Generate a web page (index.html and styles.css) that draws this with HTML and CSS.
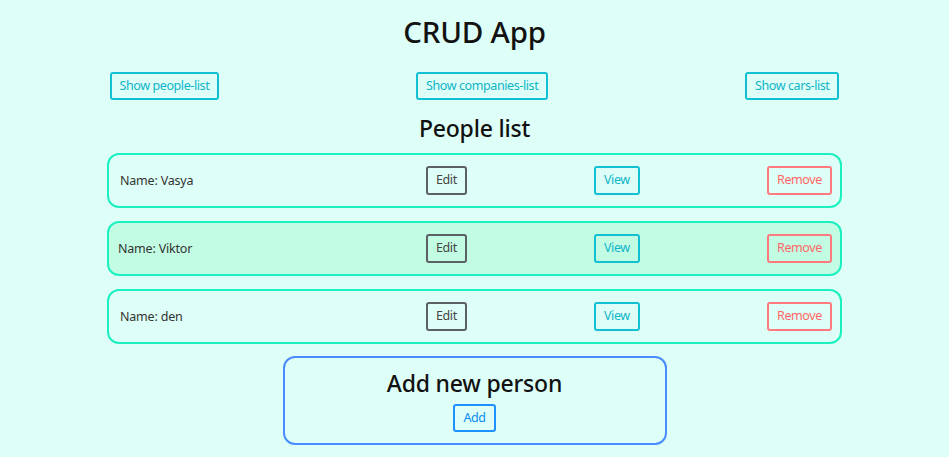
FILE: index.html
```html
<!DOCTYPE html>
<html>
<head>
<meta charset="utf-8">
<link rel="stylesheet" href="styles.css">
</head>
<body>
<div class="app">
  <h1 class="title">CRUD App</h1>
  <div class="nav">
    <button class="btn btn-info">Show people-list</button>
    <button class="btn btn-info">Show companies-list</button>
    <button class="btn btn-info">Show cars-list</button>
  </div>
  <h2 class="subtitle">People list</h2>
  <div class="list">
    <div class="item">
      <span class="name">Name: Vasya</span>
      <span class="cell"><button class="btn btn-sec">Edit</button></span>
      <span class="cell"><button class="btn btn-info">View</button></span>
      <span class="cell"><button class="btn btn-danger">Remove</button></span>
    </div>
    <div class="item hover">
      <span class="name">Name: Viktor</span>
      <span class="cell"><button class="btn btn-sec">Edit</button></span>
      <span class="cell"><button class="btn btn-info">View</button></span>
      <span class="cell"><button class="btn btn-danger">Remove</button></span>
    </div>
    <div class="item">
      <span class="name">Name: den</span>
      <span class="cell"><button class="btn btn-sec">Edit</button></span>
      <span class="cell"><button class="btn btn-info">View</button></span>
      <span class="cell"><button class="btn btn-danger">Remove</button></span>
    </div>
  </div>
  <div class="add-card">
    <h2 class="add-title">Add new person</h2>
    <button class="btn btn-primary">Add</button>
  </div>
</div>
</body>
</html>
```
FILE: styles.css
```css
* { box-sizing: border-box; }
body {
  margin: 0;
  background: #defff7;
  font-family: "Noto Sans", "Open Sans", sans-serif;
  color: #111;
}
.app {
  width: 735px;
  margin: 0 auto;
  display: flex;
  flex-direction: column;
  align-items: center;
}
.title {
  margin: 14px 0 0;
  font-size: 29.5px;
  font-weight: 500;
  line-height: 36px;
  color: #121212;
  letter-spacing: -0.2px;
}
.nav {
  margin-top: 22px;
  width: 730px;
  display: flex;
  justify-content: space-between;
}
.btn {
  background: transparent;
  font-family: inherit;
  font-size: 12.5px;
  letter-spacing: -0.4px;
  height: 29px;
  padding: 0 8px;
  border-radius: 3px;
  border: 2px solid;
  line-height: 1;
}
.nav .btn { height: 28px; }
.btn-info { color: #0fb4c8; border-color: #11c1d3; }
.btn-sec { color: #444; border-color: #5b6064; }
.btn-danger { color: #f66; border-color: #ff7a7f; }
.btn-primary { color: #0a8af5; border-color: #1e90ff; }
.subtitle {
  margin: 14px 0 0;
  font-size: 23px;
  font-weight: 500;
  line-height: 29px;
  letter-spacing: -0.2px;
}
.list {
  margin-top: 10px;
  width: 735px;
  display: flex;
  flex-direction: column;
  gap: 13px;
}
.item {
  height: 55px;
  border: 2.5px solid #1af0c0;
  border-radius: 12px;
  display: grid;
  grid-template-columns: 306px 168px 173px auto;
  align-items: center;
  padding: 0 10px 0 11px;
  font-size: 12.5px;
  letter-spacing: -0.2px;
  color: #333;
}
.item.hover { background: #c2fce3; }
.item.hover .name { margin-left: -2px; }
.add-card {
  margin-top: 12px;
  width: 384px;
  height: 89px;
  border: 2px solid #4a8cff;
  border-radius: 12px;
  display: flex;
  flex-direction: column;
  align-items: center;
}
.add-title {
  margin: 10px 0 0;
  font-size: 23px;
  font-weight: 500;
  line-height: 30px;
  letter-spacing: -0.2px;
}
.add-card .btn { margin-top: 6px; height: 28px; }
```
